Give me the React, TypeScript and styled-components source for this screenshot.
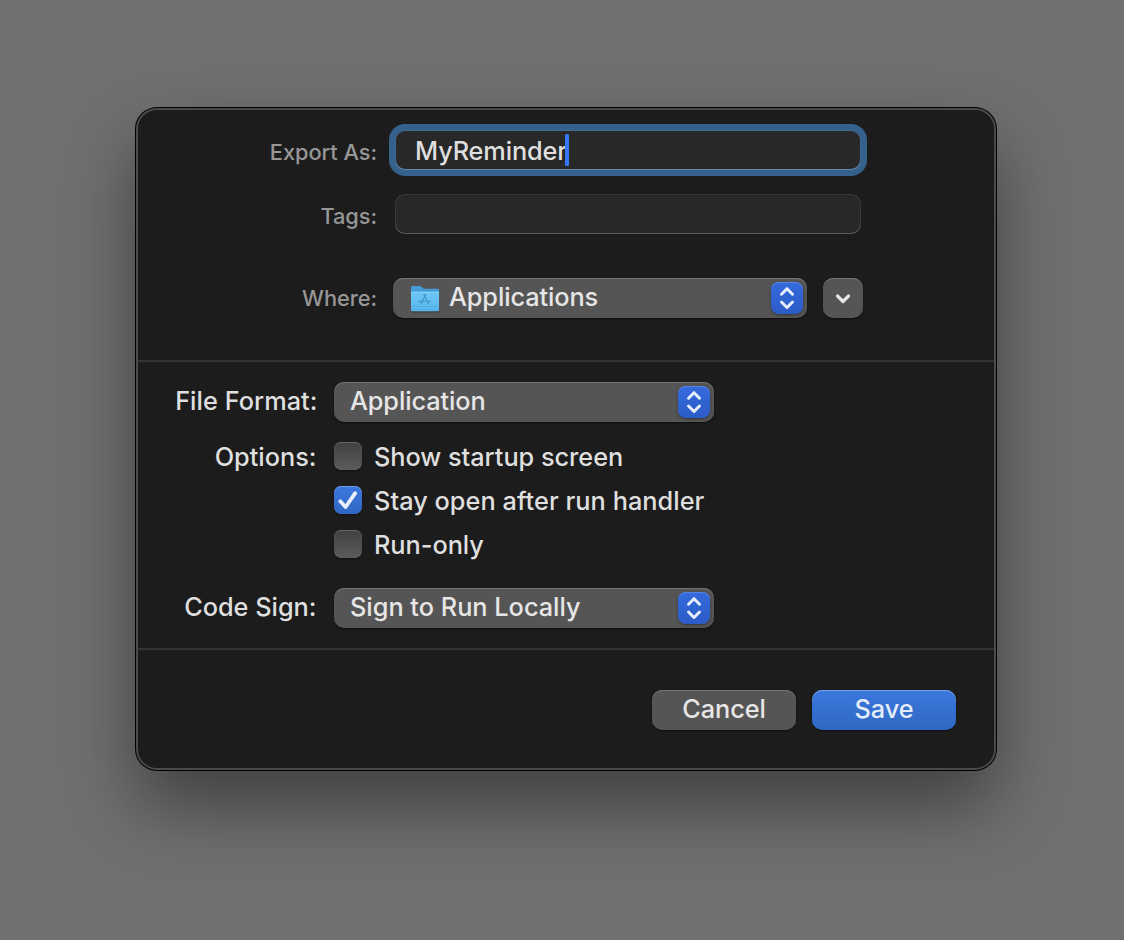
import React, { useState } from "react";
import styled, { createGlobalStyle, css } from "styled-components";

const GlobalStyle = createGlobalStyle`
  * { box-sizing: border-box; }
  body {
    margin: 0;
    background: #707070;
    font-family: Inter, "Liberation Sans", sans-serif;
    font-size: 25.3px;
    font-weight: 450;
    color: #dfdfdf;
  }
`;

const Desktop = styled.main`
  height: 940px;
  overflow: hidden;
  padding: 108px 128px 0 136px;
`;

const Dialog = styled.section`
  width: 860px;
  height: 662px;
  border: 2px solid #4a4a4a;
  border-radius: 21px;
  background: #1c1c1c;
  box-shadow: 0 0 0 1px #000, 0 36px 72px rgba(0, 0, 0, 0.43);
  display: flex;
  flex-direction: column;
`;

const Destination = styled.div`
  height: 252px;
  padding-top: 20px;
  border-bottom: 2px solid #323232;
  display: flex;
  flex-direction: column;
`;

const Settings = styled.div`
  height: 288px;
  padding-top: 20px;
  border-bottom: 2px solid #323232;
`;

const Row = styled.div<{ $gap?: number }>`
  display: flex;
  align-items: flex-start;
  margin-bottom: ${(p) => p.$gap ?? 0}px;
`;

const Text = styled.span<{ $spacing?: number }>`
  letter-spacing: ${(p) => p.$spacing ?? 0}px;
  white-space: nowrap;
`;

const SmallLabel = styled.label<{ $drop?: number }>`
  width: 239px;
  flex: none;
  text-align: right;
  font-size: 21.8px;
  font-weight: 500;
  letter-spacing: -0.05px;
  line-height: 40px;
  padding-top: ${(p) => p.$drop ?? 0}px;
  color: #979797;
`;

const Label = styled.label<{ $line?: number; $inset?: number }>`
  width: 180px;
  flex: none;
  padding-right: ${(p) => p.$inset ?? 1.5}px;
  text-align: right;
  line-height: ${(p) => p.$line ?? 38}px;
`;

const Field = styled.div<{ $focused?: boolean }>`
  width: 466px;
  height: 40px;
  margin-left: 18px;
  padding: 0 0 0 20px;
  border-radius: 10px;
  background: #282828;
  display: flex;
  align-items: center;
  line-height: 38px;
  box-shadow: inset 0 -1px 0 #5a5a5a, inset 0 0 0 1px #383838;

  span {
    padding-top: 2px;
  }
  ${(p) =>
    p.$focused &&
    css`
      box-shadow: 0 0 0 6px #35628c, inset 0 -1px 0 #6187a8, inset 0 0 0 1px #3e6c95;
    `}
`;

const Caret = styled.i`
  width: 4px;
  height: 32px;
  margin-left: -2px;
  border-radius: 1px;
  background: #3478f6;
`;

const raised = css`
  border: 0;
  border-radius: 10px;
  background: #555555;
  box-shadow: inset 0 1px 0 #747474, 0 1px 2px rgba(0, 0, 0, 0.5);
  color: #e6e6e6;
  font: inherit;
`;

const Select = styled.button<{ $width: number; $offset: number }>`
  ${raised}
  width: ${(p) => p.$width}px;
  height: 40px;
  margin-left: ${(p) => p.$offset}px;
  padding: 0 4px 0 16px;
  display: flex;
  align-items: center;
  justify-content: space-between;
`;

const Value = styled.span`
  display: flex;
  align-items: center;
  gap: 9px;
  line-height: 38px;
  padding-bottom: 2px;

  svg {
    margin: 3px 0 0 1px;
  }
`;

const Stepper = styled.span`
  width: 32px;
  height: 32px;
  border-radius: 8px;
  background: linear-gradient(#356bdd, #2b5bc6);
  box-shadow: inset 0 1px 0 #5584e2, 0 1px 3px rgba(0, 0, 0, 0.4);
  display: grid;
  place-items: center;
`;

const Expand = styled.button`
  ${raised}
  width: 40px;
  height: 40px;
  margin-left: 16px;
  padding: 0;
  display: grid;
  place-items: center;
`;

const Options = styled.div`
  margin-left: 16px;
  display: grid;
  row-gap: 16px;
`;

const Option = styled.div`
  height: 28px;
  display: flex;
  align-items: center;
  gap: 12px;
  line-height: 28px;
`;

const OptionText = styled.span`
  padding-top: 2px;
`;

const Check = styled.button<{ $on: boolean }>`
  width: 28px;
  height: 28px;
  padding: 0;
  border: 0;
  border-radius: 7px;
  background: ${(p) => (p.$on ? "linear-gradient(#3b78de, #2f66c2)" : "linear-gradient(#404040, #5c5c5c)")};
  box-shadow: inset 0 1px 0 ${(p) => (p.$on ? "#6a9ae8" : "#626262")}, 0 1px 2px rgba(0, 0, 0, 0.4);
`;

const Actions = styled.footer`
  display: flex;
  justify-content: flex-end;
  gap: 16px;
  padding: 40px 38px 0 0;
`;

const Button = styled.button<{ $primary?: boolean }>`
  ${raised}
  width: 144px;
  height: 40px;
  padding: 0 0 2px;
  line-height: 38px;
  ${(p) =>
    p.$primary &&
    css`
      color: #e4ecfa;
      background: linear-gradient(#3b78de, #2f68c3);
      box-shadow: inset 0 1px 0 #76a2ea, 0 1px 2px rgba(0, 0, 0, 0.5);
    `}
`;

const Arrows = () => (
  <Stepper>
    <svg width="32" height="32" viewBox="0 0 32 32" fill="none" stroke="#e6edfb" strokeWidth="3" strokeLinecap="round" strokeLinejoin="round">
      <path d="M10.5 12.2 16 6.7l5.5 5.5M10.5 20 16 25.5 21.5 20" />
    </svg>
  </Stepper>
);

const ApplicationsFolder = () => (
  <svg width="30" height="30" viewBox="0 0 30 30">
    <defs>
      <linearGradient id="front" x1="0" y1="0" x2="0" y2="1">
        <stop offset="0" stopColor="#6dc5f4" />
        <stop offset="1" stopColor="#5ab8ee" />
      </linearGradient>
    </defs>
    <path d="M1.5 27.5h27" stroke="#000" strokeOpacity=".3" strokeWidth="2" />
    <path d="M1 3.2Q1 2 2.2 2h7.3q.9 0 1.6.6l2 1.7q.6.5 1.4.5h13.3Q29 4.8 29 6.2V26H1z" fill="#459bd6" />
    <path d="M1 8.7Q1 7.8 2 7.8h26q1 0 1 1V26q0 1.2-1.2 1.2H2.2Q1 27.2 1 26z" fill="url(#front)" />
    <path d="M1 8.3h28" stroke="#83d2f8" />
    <path d="M1 22.5h28M1 25.5h28" stroke="#4ea8de" strokeWidth=".7" />
    <path d="m15.6 10.5-4.8 9.5M13.8 10.5l4.8 9.500M9 17.300h6M17.500 17.300h3" stroke="#4297cc" strokeWidth="1.3" strokeLinecap="round" />
  </svg>
);

const Tick = () => (
  <svg width="28" height="28" viewBox="0 0 28 28" fill="none" stroke="#e8effb" strokeWidth="3.8" strokeLinecap="round" strokeLinejoin="round">
    <path d="m6.3 15.3 5.3 5.7L21.2 7.2" />
  </svg>
);

const choices = ["Show startup screen", "Stay open after run handler", "Run-only"];

export default function App() {
  const [checked, setChecked] = useState([false, true, false]);
  return (
    <>
      <GlobalStyle />
      <Desktop>
        <Dialog>
          <Destination>
            <Row $gap={22}>
              <SmallLabel $drop={2}><Text $spacing={-0.05}>Export As:</Text></SmallLabel>
              <Field $focused><Text $spacing={-0.12}>MyReminder</Text><Caret /></Field>
            </Row>
            <Row $gap={42}>
              <SmallLabel $drop={2}><Text $spacing={-0.05}>Tags:</Text></SmallLabel>
              <Field />
            </Row>
            <Row>
              <SmallLabel><Text $spacing={-0.05}>Where:</Text></SmallLabel>
              <Select $width={414} $offset={16}>
                <Value><ApplicationsFolder /><Text $spacing={-0.1}>Applications</Text></Value>
                <Arrows />
              </Select>
              <Expand aria-label="Expand">
                <svg width="40" height="40" viewBox="0 0 40 40" fill="none" stroke="#e6e6e6" strokeWidth="3.2" strokeLinecap="round" strokeLinejoin="round">
                  <path d="m14.5 18 5.5 5.5 5.5-5.5" />
                </svg>
              </Expand>
            </Row>
          </Destination>
          <Settings>
            <Row $gap={20}>
              <Label $inset={0.5}><Text $spacing={0.05}>File Format:</Text></Label>
              <Select $width={380} $offset={16}>
                <Value><Text $spacing={-0.1}>Application</Text></Value>
                <Arrows />
              </Select>
            </Row>
            <Row $gap={30}>
              <Label $line={30}><Text>Options:</Text></Label>
              <Options>
                {choices.map((name, i) => (
                  <Option key={name}>
                    <Check
                      $on={checked[i]}
                      aria-label={name}
                      onClick={() => setChecked(checked.map((v, j) => (j === i ? !v : v)))}
                    >
                      {checked[i] && <Tick />}
                    </Check>
                    <OptionText><Text $spacing={i === 1 ? 0.04 : -0.03}>{name}</Text></OptionText>
                  </Option>
                ))}
              </Options>
            </Row>
            <Row>
              <Label><Text>Code Sign:</Text></Label>
              <Select $width={380} $offset={16}>
                <Value><Text>Sign to Run Locally</Text></Value>
                <Arrows />
              </Select>
            </Row>
          </Settings>
          <Actions>
            <Button><Text $spacing={-0.1}>Cancel</Text></Button>
            <Button $primary><Text $spacing={-0.1}>Save</Text></Button>
          </Actions>
        </Dialog>
      </Desktop>
    </>
  );
}
